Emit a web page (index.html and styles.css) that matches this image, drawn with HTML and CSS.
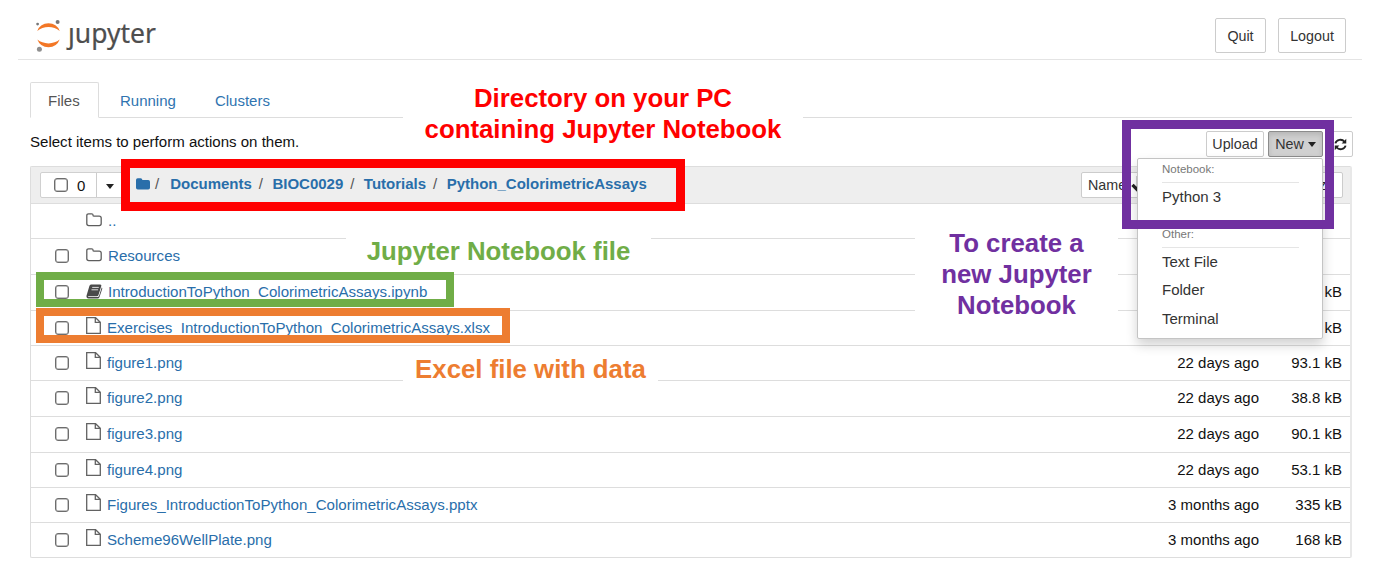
FILE: index.html
```html
<!DOCTYPE html>
<html lang="en">
<head>
<meta charset="utf-8">
<title>Jupyter file browser</title>
<link rel="stylesheet" href="styles.css">
</head>
<body>
<svg class="defs" aria-hidden="true">
  <symbol id="folder" viewBox="0 0 16 14"><path d="M.8 3V10.6Q.8 12.6 2.8 12.6H13.2Q15.2 12.6 15.2 10.6V5.2Q15.2 3.2 13.2 3.2H8.2Q7 3.2 7 2.2Q7 .8 5.6 .8H2.6Q.8 .8 .8 2.6Z" fill="none" stroke="#5e5e5e" stroke-width="1.3"/></symbol>
  <symbol id="file" viewBox="0 0 15 17"><path d="M.7 .7H9.6L14.3 5.2V16.3H.7ZM9.3 .9V5.4H14.1" fill="none" stroke="#626262" stroke-width="1.3"/></symbol>
  <symbol id="book" viewBox="0 0 17 15"><path d="M5 .5H14.2Q15.8 .5 15.3 2L12.4 11.2Q12 12.2 10.8 12.2H3Q1.7 12.2 1.9 13H11.6Q12.6 13 13 12L15.7 3.6Q16.6 4 16.2 5L13.5 13Q13 14.5 11.5 14.5H2.5Q.2 14.3 .5 11.8L3.4 2Q3.8 .6 5 .5Z" fill="#4a4a4a"/><path d="M6.2 3.4H12.8M5.5 5.8H12.1" stroke="#ddd" stroke-width="1"/></symbol>
</svg>
<div class="page">
  <header class="header">
    <a class="logo">
      <svg class="mark" viewBox="0 0 28 34"><path d="M2.3 13A12 12 0 0 1 24.7 13Q20 9.1 13.5 9.1T2.3 13ZM2.3 21.6A12 12 0 0 0 24.7 21.6Q20 25.4 13.5 25.4T2.3 21.6Z" fill="#f37726"/><circle cx="2.6" cy="6.1" r="1.4" fill="#767677"/><circle cx="22.6" cy="4" r="2" fill="#767677"/><circle cx="4.4" cy="31.3" r="2.5" fill="#8f8f8f"/></svg>
      <span class="word"><span class="j">j</span>upyter</span>
    </a>
    <div class="session"><button class="btn">Quit</button><button class="btn">Logout</button></div>
  </header>
  <main class="main">
    <nav class="tabs"><a class="tab active">Files</a><a class="tab">Running</a><a class="tab">Clusters</a></nav>
    <div class="toolbar">
      <span class="hint">Select items to perform actions on them.</span>
      <div class="actions">
        <button class="btn sm upload">Upload</button><button class="btn sm new">New <i class="caret"></i></button><button class="btn sm refresh"><svg viewBox="0 0 14 14"><path d="M1.5 5.8A5.5 5 0 0 1 11.3 4M12.5 8.2A5.5 5 0 0 1 2.7 10" fill="none" stroke="#222" stroke-width="2"/><path d="M13.2 .8V5.8H8.2ZM.8 13.2V8.2H5.8Z" fill="#222"/></svg></button>
      </div>
    </div>
    <section class="list">
      <div class="head">
        <div class="select"><span class="selall"><i class="check"></i>0</span><span class="drop"><i class="caret"></i></span></div>
        <div class="crumbs"><svg viewBox="0 0 14 12"><path d="M0 2Q0 .3 1.7 .3H4.6Q6.3 .3 6.4 2H12.2Q14 2 14 3.8V9.8Q14 11.6 12.2 11.6H1.8Q0 11.6 0 9.8Z" fill="#296eaa"/></svg><span class="sep first">/</span><a>Documents</a><span class="sep">/</span><a>BIOC0029</a><span class="sep">/</span><a>Tutorials</a><span class="sep">/</span><a>Python_ColorimetricAssays</a></div>
        <div class="sorts"><button class="btn sm name">Name<svg viewBox="0 0 10 12"><path d="M5 0V10M1 6L5 10L9 6" fill="none" stroke="#222" stroke-width="2.2"/></svg></button><button class="btn sm size">File size</button></div>
      </div>
      <div class="row"><i class="gap"></i><svg class="ico folder"><use href="#folder"/></svg><a class="nm">..</a></div>
      <div class="row tall"><i class="check"></i><svg class="ico folder"><use href="#folder"/></svg><a class="nm">Resources</a></div>
      <div class="row tall"><i class="check"></i><svg class="ico book"><use href="#book"/></svg><a class="nm">IntroductionToPython_ColorimetricAssays.ipynb</a><span class="kb">kB</span></div>
      <div class="row"><i class="check"></i><svg class="ico file"><use href="#file"/></svg><a class="nm">Exercises_IntroductionToPython_ColorimetricAssays.xlsx</a><span class="kb">kB</span></div>
      <div class="row"><i class="check"></i><svg class="ico file"><use href="#file"/></svg><a class="nm">figure1.png</a><span class="date">22 days ago</span><span class="kb">93.1 kB</span></div>
      <div class="row tall"><i class="check"></i><svg class="ico file"><use href="#file"/></svg><a class="nm">figure2.png</a><span class="date">22 days ago</span><span class="kb">38.8 kB</span></div>
      <div class="row tall"><i class="check"></i><svg class="ico file"><use href="#file"/></svg><a class="nm">figure3.png</a><span class="date">22 days ago</span><span class="kb">90.1 kB</span></div>
      <div class="row"><i class="check"></i><svg class="ico file"><use href="#file"/></svg><a class="nm">figure4.png</a><span class="date">22 days ago</span><span class="kb">53.1 kB</span></div>
      <div class="row"><i class="check"></i><svg class="ico file"><use href="#file"/></svg><a class="nm">Figures_IntroductionToPython_ColorimetricAssays.pptx</a><span class="date">3 months ago</span><span class="kb">335 kB</span></div>
      <div class="row"><i class="check"></i><svg class="ico file"><use href="#file"/></svg><a class="nm">Scheme96WellPlate.png</a><span class="date">3 months ago</span><span class="kb">168 kB</span></div>
    </section>
  </main>
  <div class="menu">
    <div class="mh">Notebook:</div>
    <a class="mi">Python 3</a>
    <div class="split"></div>
    <div class="mh">Other:</div>
    <a class="mi">Text File</a><a class="mi">Folder</a><a class="mi">Terminal</a>
  </div>
  <div class="note n-dir">Directory on your PC<br>containing Jupyter Notebook</div>
  <div class="note n-nb">Jupyter Notebook file</div>
  <div class="note n-xl">Excel file with data</div>
  <div class="note n-new">To create a<br>new Jupyter<br>Notebook</div>
  <div class="frame f-dir"></div>
  <div class="frame f-nb"></div>
  <div class="frame f-xl"></div>
  <div class="frame f-new"></div>
</div>
</body>
</html>
```
FILE: styles.css
```css
* { box-sizing: border-box; }
body { margin: 0; background: #fff; color: #111; font: 15px/20px "Liberation Sans", Arial, sans-serif; }
.defs { position: absolute; width: 0; height: 0; }
.page { position: relative; width: 1379px; height: 582px; overflow: hidden; }
.header { height: 60px; margin: 0 17px 0 18px; padding: 18px 16px 0 17px; border-bottom: 1px solid #e4e4e4; display: flex; justify-content: space-between; align-items: flex-start; }
.logo { display: flex; align-items: flex-start; }
.mark { width: 28px; height: 34px; }
.word { margin: -3px 0 0 5px; font: 26.5px/36px "Noto Sans", sans-serif; color: #4e4e4e; -webkit-text-stroke: .2px #4e4e4e; }
.j { display: inline-block; clip-path: inset(13px -6px 0 -6px); }
.session { display: flex; gap: 12px; }
.btn { font: inherit; font-size: 14.3px; color: #333; background: #fff; border: 1px solid #ccc; border-radius: 2px; height: 35px; padding: 0 12px; white-space: nowrap; }
.session .btn:first-child { width: 51px; padding: 0; }
.session .btn:last-child { width: 68px; padding: 0; }
.main { padding: 22px 26px 0 30px; }
.tabs { display: flex; height: 36px; border-bottom: 1px solid #ddd; margin-right: 1px; }
.tab { color: #2f74b0; padding: 9px 20px 0 21px; }
.tab + .tab + .tab { padding-left: 19px; }
.tab.active { width: 69px; height: 36px; color: #555; padding: 8px 0 0 17px; border: 1px solid #ddd; border-bottom-color: #fff; border-radius: 2px 2px 0 0; }
.toolbar { height: 48px; padding-top: 13px; display: flex; justify-content: space-between; align-items: flex-start; }
.hint { padding-top: 1px; font-size: 15.05px; }
.actions { display: flex; }
.btn.sm { height: 26px; padding: 0 5px; }
.upload { width: 58px; margin-right: 4px; }
.btn.new { width: 55px; margin-right: 4px; background: #d0d0d0; border-color: #8c8c8c; box-shadow: inset 0 3px 5px rgba(0,0,0,.12); }
.refresh { width: 26px; display: flex; align-items: center; justify-content: center; }
.refresh svg { width: 13px; height: 13px; flex: none; }
.caret { display: inline-block; vertical-align: 2px; border: 4.5px solid transparent; border-top: 5px solid #222; border-bottom: 0; }
.list { width: 1322px; border: 1px solid #ddd; border-right: 2px solid #e8e8e8; border-radius: 2px; }
.head { height: 36px; background: #eee; display: flex; align-items: center; padding: 0 7px 0 9px; }
.select { display: flex; width: 90px; height: 26px; background: #fff; border: 1px solid #d0d0d0; border-radius: 2px; line-height: 25px; }
.selall { display: flex; align-items: center; gap: 9px; width: 56px; padding-left: 13px; border-right: 1px solid #ccc; }
.drop { padding-left: 9px; }
.check { display: block; width: 14px; height: 14px; border: 1px solid #6d6d6d; box-shadow: inset 0 0 0 .5px #888; border-radius: 3px; background: #fff; flex: none; }
.crumbs { display: flex; align-items: center; padding: 0 0 2px 6px; font-weight: bold; color: #296eaa; }
.crumbs svg { width: 14px; height: 12px; }
.sep { font-weight: normal; color: #555; padding: 0 9.4px 0 7px; }
.sep.first { padding-left: 5px; padding-right: 11px; }
.sorts { margin-left: auto; display: flex; }
.name { width: 72px; display: flex; align-items: center; gap: 5px; }
.btn.name { padding: 0 6px; }
.size { width: 80px; margin-left: 110px; text-align: right; }
.btn.size { padding-right: 8px; }
.row { height: 35px; border-top: 1px solid #ddd; display: flex; align-items: center; padding: 0 8px 0 24px; }
.row.tall { height: 36px; }
.row:last-child { height: 35px; }
.gap { width: 14px; flex: none; }
.ico { flex: none; margin-left: 17px; }
.folder { width: 16px; height: 14px; margin-right: 6px; margin-top: -3px; }
.book { width: 17px; height: 15px; margin-right: 5px; margin-top: -3px; }
.file { width: 15px; height: 17px; margin-right: 6px; margin-top: -6px; }
.row .check { margin-top: -1px; }
.nm { color: #296eaa; margin-right: auto; font-size: 15.08px; padding-bottom: 1px; white-space: nowrap; }
.date, .kb { padding-bottom: 1px; text-align: right; }
.kb { width: 83px; }
.menu { position: absolute; left: 1137px; top: 158px; width: 186px; height: 181px; background: #fff; border: 1px solid #c4c4c4; border-radius: 2px; box-shadow: 0 6px 12px rgba(0,0,0,.18); padding-top: 1px; }
.mh { font-size: 11.5px; line-height: 18px; height: 23px; color: #777; margin: 0 23px 0 24px; border-bottom: 1px solid #e5e5e5; }
.mi { display: block; height: 28.5px; padding: 4px 0 0 24px; color: #333; }
.split { height: 1px; background: #ddd; margin: 9px 0 3px; }
.note { position: absolute; background: #fff; font-weight: bold; font-size: 25.8px; line-height: 31px; text-align: center; white-space: nowrap; }
.n-dir { left: 403px; top: 83px; width: 400px; height: 70px; color: #f00; }
.n-nb { left: 346px; top: 236px; width: 305px; height: 35px; color: #70ad47; }
.n-xl { left: 403px; top: 354px; width: 255px; height: 34px; color: #ed7d31; }
.n-new { left: 915px; top: 228px; width: 203px; height: 100px; color: #7030a0; }
.frame { position: absolute; border: 8px solid; box-shadow: inset 0 0 0 1px currentColor; }
.f-dir { left: 121px; top: 159px; width: 564px; height: 52px; color: #f00; }
.f-nb { left: 36px; top: 272px; width: 418px; height: 35px; color: #70ad47; box-shadow: none; }
.f-xl { left: 36px; top: 308px; width: 474px; height: 35px; color: #ed7d31; box-shadow: none; }
.f-new { left: 1122px; top: 120px; width: 212px; height: 109px; color: #7030a0; }
```
